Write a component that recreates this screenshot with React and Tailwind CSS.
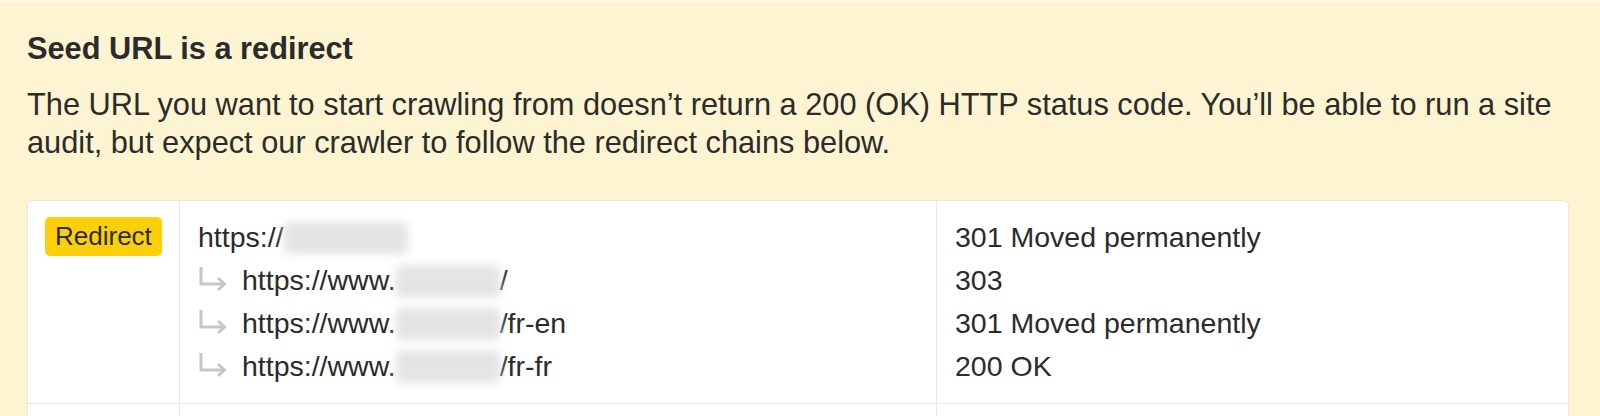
import React from "react";

const CHAIN = [
  { prefix: "https://", blur: "w-[124px]", suffix: "", status: "301 Moved permanently", nested: false },
  { prefix: "https://www.", blur: "w-[104px]", suffix: "/", status: "303", nested: true },
  { prefix: "https://www.", blur: "w-[104px]", suffix: "/fr-en", status: "301 Moved permanently", nested: true },
  { prefix: "https://www.", blur: "w-[104px]", suffix: "/fr-fr", status: "200 OK", nested: true },
];

function HopArrow() {
  return (
    <svg width="30" height="26" viewBox="0 0 30 26" className="shrink-0 mr-[14px] -mt-[4px]" fill="none">
      <path d="M3 1 V18 H26" stroke="#c6c6c6" strokeWidth="3" />
      <path d="M20 12 L26.5 18 L20 24" stroke="#c6c6c6" strokeWidth="3" />
    </svg>
  );
}

// blurred-out domain
function Hidden({ w }) {
  return (
    <span className={`inline-block h-[32px] ${w} bg-[#e4e4e4] blur-[4px] rounded-sm align-middle`} />
  );
}

export default function App() {
  return (
    <div
      className="w-[1600px] h-[416px] overflow-hidden bg-[#fdf5d1] border-t-2 border-[#fefbeb] text-[#2b2b2b]"
      style={{ fontFamily: '"Liberation Sans", Arial, sans-serif' }}
    >
      <div className="pl-[27px] pr-[20px] pt-[29px]">
        <h2 className="text-[30.75px] leading-[36px] font-bold">Seed URL is a redirect</h2>
        <p className="mt-[19px] text-[30.75px] leading-[38px]">
          The URL you want to start crawling from doesn’t return a 200 (OK) HTTP status code. You’ll be able to run a site audit, but expect our crawler to follow the redirect chains below.
        </p>
      </div>

      <div className="ml-[27px] mr-[31px] mt-[38px] bg-white border border-[#ebe7da] rounded-[5px]">
        <div className="flex border-b border-[#e8e8e8]">
          <div className="w-[151px] shrink-0 pl-[17px] pt-[16px]">
            <span className="inline-flex items-center h-[39px] px-[10px] rounded-[5px] bg-[#fbd00a] text-[26px] text-[#2b2b2b]">
              Redirect
            </span>
          </div>
          <div className="w-[757px] shrink-0 border-l border-[#e8e8e8] pl-[18px] pt-[15px] pb-[15px] text-[28.5px] leading-[43px]">
            {CHAIN.map((c, i) => (
              <div key={i} className="flex items-center">
                {c.nested && <HopArrow />}
                <span>{c.prefix}</span>
                <Hidden w={c.blur} />
                <span>{c.suffix}</span>
              </div>
            ))}
          </div>
          <div className="flex-1 border-l border-[#e8e8e8] pl-[18px] pt-[15px] pb-[15px] text-[28.5px] leading-[43px]">
            {CHAIN.map((c, i) => (
              <div key={i}>{c.status}</div>
            ))}
          </div>
        </div>
        <div className="flex h-[40px]">
          <div className="w-[151px] shrink-0" />
          <div className="w-[757px] shrink-0 border-l border-[#e8e8e8]" />
          <div className="flex-1 border-l border-[#e8e8e8]" />
        </div>
      </div>
    </div>
  );
}
